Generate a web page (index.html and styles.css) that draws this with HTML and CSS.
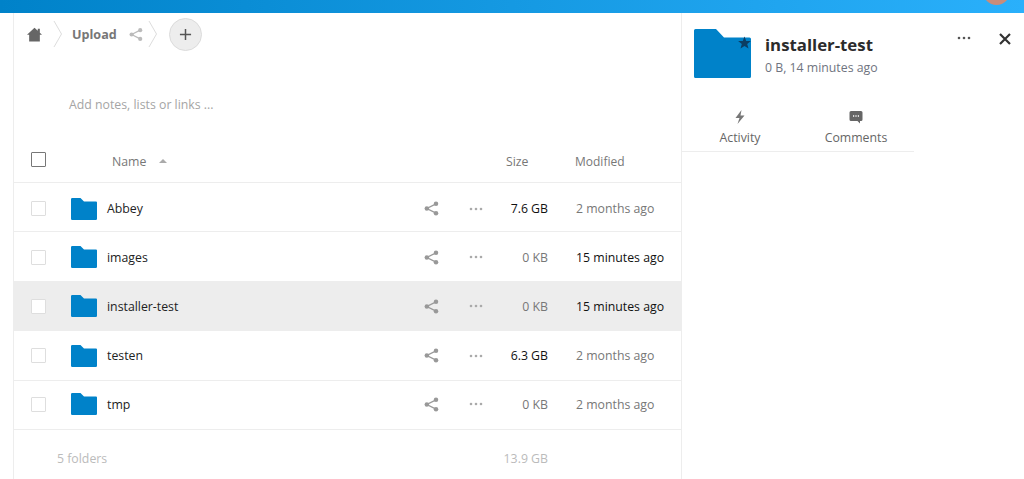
FILE: index.html
```html
<!DOCTYPE html>
<html lang="en">
<head>
<meta charset="utf-8">
<title>Files</title>
<link rel="stylesheet" href="styles.css">
</head>
<body>
<header class="topbar"><span class="avatar"></span></header>
<div class="app">
  <main class="files">
    <nav class="crumbs">
      <svg class="home" viewBox="0 0 16 16"><path d="M8 .8 0 8.300h2.300V15.500h11.400V8.300H16l-2.300-2.200V1.800h-2.200v2.200z" fill="#666"/></svg>
      <svg class="chev chev-a" viewBox="0 0 10 28"><path d="M1 1l7.500 13L1 27" fill="none" stroke="#ddd"/></svg>
      <span class="crumb">Upload</span>
      <svg class="crumb-share" viewBox="0 0 16 16"><use href="#share"/></svg>
      <svg class="chev chev-b" viewBox="0 0 10 28"><path d="M1 1l7.500 13L1 27" fill="none" stroke="#ddd"/></svg>
      <span class="add"><svg viewBox="0 0 14 14"><path d="M7 1v12M1 7h12" stroke="#555" stroke-width="1.600" fill="none"/></svg></span>
    </nav>
    <p class="notes">Add notes, lists or links ...</p>
    <div class="row head">
      <span class="check-cell"><span class="box box-dark"></span></span>
      <span class="name-head">Name<i class="sort"></i></span>
      <span class="size">Size</span>
      <span class="date">Modified</span>
    </div>
    <div class="row item">
      <span class="check-cell"><span class="box"></span></span>
      <svg class="folder" viewBox="0 0 26 22"><use href="#folder"/></svg>
      <span class="name">Abbey</span>
      <svg class="share" viewBox="0 0 16 16"><use href="#share"/></svg>
      <svg class="more" viewBox="0 0 14 4"><use href="#dots"/></svg>
      <span class="size strong">7.6 GB</span>
      <span class="date">2 months ago</span>
    </div>
    <div class="row item">
      <span class="check-cell"><span class="box"></span></span>
      <svg class="folder" viewBox="0 0 26 22"><use href="#folder"/></svg>
      <span class="name">images</span>
      <svg class="share" viewBox="0 0 16 16"><use href="#share"/></svg>
      <svg class="more" viewBox="0 0 14 4"><use href="#dots"/></svg>
      <span class="size">0 KB</span>
      <span class="date strong">15 minutes ago</span>
    </div>
    <div class="row item selected">
      <span class="check-cell"><span class="box"></span></span>
      <svg class="folder" viewBox="0 0 26 22"><use href="#folder"/></svg>
      <span class="name">installer-test</span>
      <svg class="share" viewBox="0 0 16 16"><use href="#share"/></svg>
      <svg class="more" viewBox="0 0 14 4"><use href="#dots"/></svg>
      <span class="size">0 KB</span>
      <span class="date strong">15 minutes ago</span>
    </div>
    <div class="row item">
      <span class="check-cell"><span class="box"></span></span>
      <svg class="folder" viewBox="0 0 26 22"><use href="#folder"/></svg>
      <span class="name">testen</span>
      <svg class="share" viewBox="0 0 16 16"><use href="#share"/></svg>
      <svg class="more" viewBox="0 0 14 4"><use href="#dots"/></svg>
      <span class="size strong">6.3 GB</span>
      <span class="date">2 months ago</span>
    </div>
    <div class="row item">
      <span class="check-cell"><span class="box"></span></span>
      <svg class="folder" viewBox="0 0 26 22"><use href="#folder"/></svg>
      <span class="name">tmp</span>
      <svg class="share" viewBox="0 0 16 16"><use href="#share"/></svg>
      <svg class="more" viewBox="0 0 14 4"><use href="#dots"/></svg>
      <span class="size">0 KB</span>
      <span class="date">2 months ago</span>
    </div>
    <div class="row summary">
      <span class="count">5 folders</span>
      <span class="size">13.9 GB</span>
    </div>
  </main>
  <aside class="sidebar">
    <div class="side-head">
      <span class="big-folder">
        <svg viewBox="0 0 57 49"><path d="M1.500 0h20.500l8 8.500h25.500a1.500 1.500 0 0 1 1.500 1.500v37.500a1.500 1.500 0 0 1-1.500 1.500h-54a1.500 1.500 0 0 1-1.500-1.500v-46a1.500 1.500 0 0 1 1.500-1.500z" fill="#0082c9"/><path d="M50.500 7.500l1.700 4.400 4.700.2-3.700 2.900 1.300 4.500-4-2.600-4 2.600 1.300-4.500-3.700-2.900 4.700-.2z" fill="#0b3d63"/></svg>
      </span>
      <div class="side-title">
        <h1>installer-test</h1>
        <p>0 B, 14 minutes ago</p>
      </div>
      <svg class="side-more" viewBox="0 0 14 4"><use href="#dots"/></svg>
      <svg class="close" viewBox="0 0 12 12"><path d="M1 1l10 10M11 1 1 11" stroke="#333" stroke-width="2.200" fill="none"/></svg>
    </div>
    <div class="tabs">
      <div class="tab">
        <svg viewBox="0 0 12 16"><path d="M7.500 1 1.500 9h4L3.500 15l7-8.500H6.500z" fill="#777"/></svg>
        <span>Activity</span>
      </div>
      <div class="tab">
        <svg viewBox="0 0 14 14"><path d="M2 1h10a1.500 1.500 0 0 1 1.500 1.500v7a1.500 1.500 0 0 1-1.500 1.500h-1v2.500L8.500 11H2A1.500 1.500 0 0 1 .5 9.500v-7A1.500 1.500 0 0 1 2 1z" fill="#666"/><path d="M4 6h1.200M6.400 6h1.200M8.800 6H10" stroke="#fff" stroke-width="1.300"/></svg>
        <span>Comments</span>
      </div>
    </div>
  </aside>
</div>
<svg class="defs" aria-hidden="true">
  <defs>
    <path id="folder" d="M0 1.200A1.200 1.200 0 0 1 1.200 0h8.300l3.500 3.500h12A1 1 0 0 1 26 4.500v16.300a1.200 1.200 0 0 1-1.200 1.200H1.200A1.200 1.200 0 0 1 0 20.800z" fill="#0082c9"/>
    <g id="share">
      <circle cx="12.800" cy="3" r="2.400" fill="currentColor"/>
      <circle cx="3" cy="8" r="2.400" fill="currentColor"/>
      <circle cx="12.800" cy="13" r="2.400" fill="currentColor"/>
      <path d="M12.800 3 3 8l9.800 5" fill="none" stroke="currentColor" stroke-width="1.400"/>
    </g>
    <g id="dots" fill="currentColor">
      <circle cx="2" cy="2" r="1.300"/>
      <circle cx="7" cy="2" r="1.300"/>
      <circle cx="12" cy="2" r="1.300"/>
    </g>
  </defs>
</svg>
</body>
</html>
```

FILE: styles.css
```css
* { box-sizing: border-box; }
html, body { margin: 0; height: 479px; overflow: hidden; }
body { background: #fff; font-family: "Open Sans", "Noto Sans", sans-serif; font-size: 12.3px; color: #222; }
.defs { width: 0; height: 0; display: block; }

.topbar { height: 13px; background: linear-gradient(90deg, #0082c9 0%, #2ab0fb 100%); position: relative; overflow: hidden; }
.avatar { position: absolute; left: 983px; top: -22px; width: 27px; height: 27px; border-radius: 50%; background: #c98c7a; }

.app { display: flex; height: 466px; margin-left: 13px; }
.files { width: 669px; flex: none; border-left: 1px solid #ededed; border-right: 1px solid #ededed; }

.crumbs { display: flex; align-items: center; height: 42px; padding-left: 13px; }
.home { width: 15px; height: 15px; flex: none; }
.chev { width: 10px; height: 28px; flex: none; }
.chev-a { margin-left: 11px; }
.crumb { margin-left: 9px; width: 45px; font-weight: 700; color: #777; font-size: 12.6px; }
.crumb-share { width: 14px; height: 15px; margin-left: 12px; color: #bbb; flex: none; }
.chev-b { margin-left: 5px; }
.add { width: 33px; height: 33px; border-radius: 50%; background: #ededed; border: 1px solid #dbdbdb; margin-left: 11px; display: flex; align-items: center; justify-content: center; flex: none; }
.add svg { width: 13px; height: 13px; }

.notes { margin: 0; height: 79px; padding: 40px 0 0 55px; color: #a5a5a5; font-size: 12.3px; line-height: 20px; }

.row { display: flex; align-items: center; height: 49.4px; border-bottom: 1px solid #ededed; position: relative; }
.item { padding-top: 1px; }
.item:nth-child(4) { padding-top: 3px; }
.item:nth-child(8) { padding-top: 0; padding-bottom: 1px; }
.head { height: 49px; color: #777; }
.head .check-cell { margin-top: 2px; }
.check-cell { width: 57px; flex: none; padding-left: 17px; display: flex; }
.box { width: 15px; height: 15px; border: 1px solid #dedede; border-radius: 1px; background: #fff; display: block; }
.box-dark { border-color: #777; }
.name-head { margin: 6px 0 0 41px; display: flex; align-items: center; flex: 1; }
.sort { width: 0; height: 0; margin-left: 13px; border: 4px solid transparent; border-top: 0; border-bottom: 4px solid #aaa; }

.folder { width: 26px; height: 22px; flex: none; }
.name { margin-left: 10px; flex: 1; color: #222; }
.share { width: 15px; height: 15px; flex: none; color: #999; }
.more { width: 14px; height: 4px; margin-left: 30px; color: #aaa; flex: none; }
.size { width: 57px; margin-left: 8px; margin-right: 133px; text-align: right; color: #777; flex: none; }
.head .size { width: auto; position: absolute; left: 492px; margin: 6px 0 0; }
.date { position: absolute; left: 562px; color: #777; white-space: nowrap; }
.head .date { margin-top: 6px; left: 561px; font-size: 12px; }
.strong { color: #111; }
.selected { background: #ededed; }

.summary { border-bottom: 0; color: #bbb; height: 58px; }
.count { margin-left: 43px; flex: 1; }
.summary .size { color: #bbb; }

.sidebar { flex: 1; position: relative; }
.side-head { display: flex; align-items: flex-start; height: 87px; padding: 16px 0 0 12px; }
.big-folder { width: 57px; height: 49px; flex: none; }
.big-folder svg { width: 57px; height: 49px; display: block; }
.side-title { margin-left: 14px; width: 186px; flex: none; }
.side-title h1 { margin: 4px 0 0; font-size: 16.8px; line-height: 24px; font-weight: 700; color: #2b2b2b; }
.side-title p { margin: 1px 0 0; font-size: 12.3px; line-height: 20px; color: #6f7480; }
.side-more { width: 14px; height: 4px; color: #555; margin: 7px 0 0 6px; flex: none; }
.close { width: 12px; height: 12px; margin-left: 28px; margin-top: 4px; flex: none; }

.tabs { display: flex; width: 232px; height: 52px; border-bottom: 1px solid #ededed; }
.tab { width: 116px; display: flex; flex-direction: column; align-items: center; color: #666; font-size: 12.3px; padding-top: 9px; }
.tab svg { width: 16px; height: 16px; }
.tab:nth-child(2) svg { width: 14px; height: 14px; margin: 1px 0; }
.tab span { line-height: 20px; margin-top: 3px; }
```
